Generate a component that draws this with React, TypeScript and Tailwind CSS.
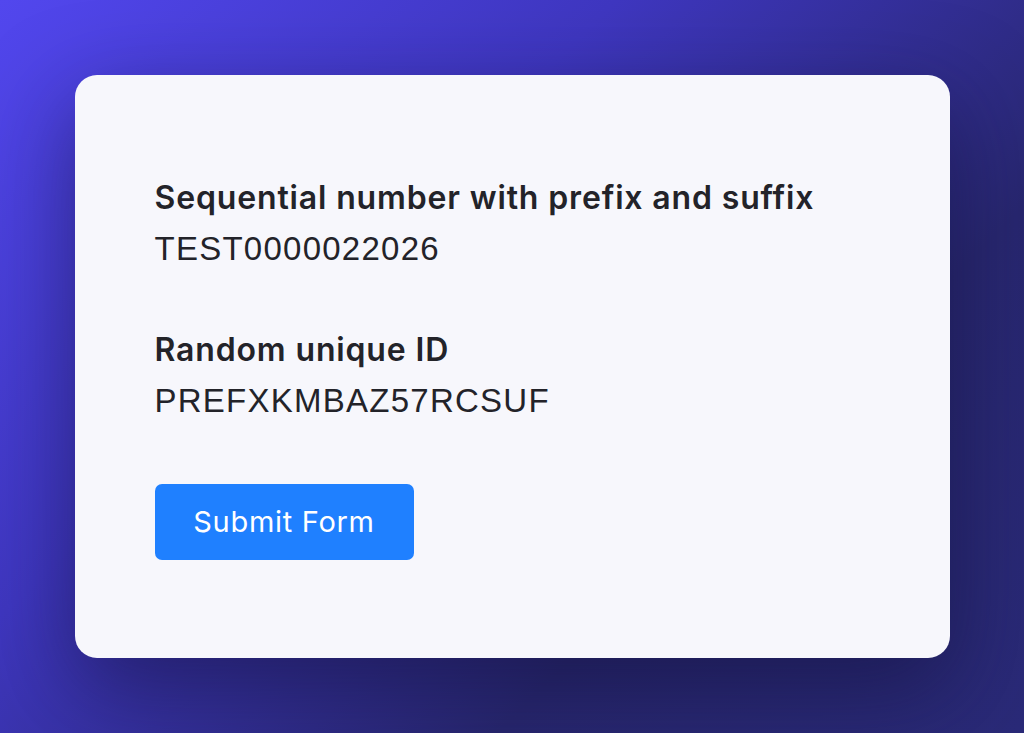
import React from 'react';

const fields = [
  { label: 'Sequential number with prefix and suffix', value: 'TEST0000022026' },
  { label: 'Random unique ID', value: 'PREFXKMBAZ57RCSUF' },
];

export default function App() {
  return (
    <div
      className="h-screen w-full flex items-center justify-center bg-[linear-gradient(135deg,#5247ee_0%,#3f37c0_35%,#28276f_70%,#2a2a78_100%)]"
      style={{ fontFamily: 'Inter, "Noto Sans", sans-serif' }}
    >
      <div className="w-[875px] h-[583px] bg-[#f7f7fc] rounded-[22px] shadow-[0_30px_90px_rgba(18,16,60,0.55)] pl-20 pt-[97px] text-[#232329]">
        <div className="flex flex-col gap-[50px]">
          {fields.map(f => (
            <div key={f.label} className="flex flex-col">
              <span className="text-[32px] leading-[51px] font-semibold tracking-[0.85px]">{f.label}</span>
              <span className="font-['Liberation_Sans',Arial,sans-serif] text-[33px] leading-[51px] font-normal tracking-[1.25px]">
                {f.value}
              </span>
            </div>
          ))}
        </div>
        <button className="mt-[58px] w-[259px] h-[76px] rounded-[7px] bg-[#1f80ff] text-white text-[29px] tracking-[0.7px] font-normal">
          Submit Form
        </button>
      </div>
    </div>
  );
}
